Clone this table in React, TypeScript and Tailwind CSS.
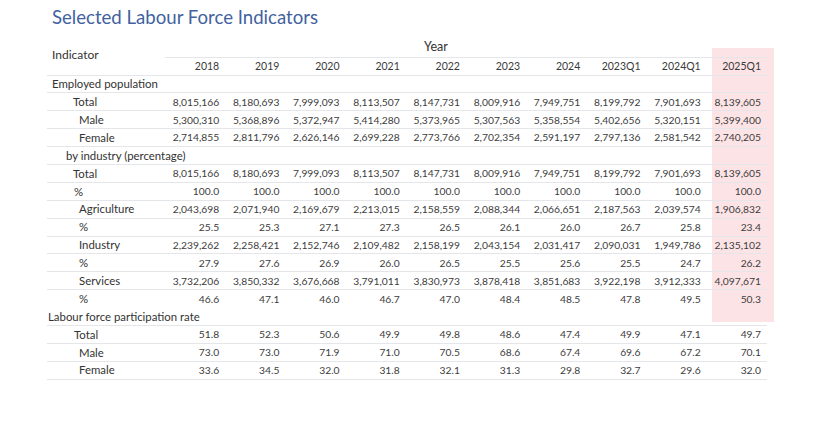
const years = ['2018', '2019', '2020', '2021', '2022', '2023', '2024', '2023Q1', '2024Q1', '2025Q1'];

type Row = { label: string; indent: string; values?: string[]; line?: boolean };

const rows: Row[] = [
  { label: 'Employed population', indent: 'pl-[5px]' },
  { label: 'Total', indent: 'pl-[26px]', values: ['8,015,166', '8,180,693', '7,999,093', '8,113,507', '8,147,731', '8,009,916', '7,949,751', '8,199,792', '7,901,693', '8,139,605'] },
  { label: 'Male', indent: 'pl-[32px]', values: ['5,300,310', '5,368,896', '5,372,947', '5,414,280', '5,373,965', '5,307,563', '5,358,554', '5,402,656', '5,320,151', '5,399,400'] },
  { label: 'Female', indent: 'pl-[32px]', values: ['2,714,855', '2,811,796', '2,626,146', '2,699,228', '2,773,766', '2,702,354', '2,591,197', '2,797,136', '2,581,542', '2,740,205'] },
  { label: 'by industry (percentage)', indent: 'pl-[19px]' },
  { label: 'Total', indent: 'pl-[26px]', values: ['8,015,166', '8,180,693', '7,999,093', '8,113,507', '8,147,731', '8,009,916', '7,949,751', '8,199,792', '7,901,693', '8,139,605'] },
  { label: '%', indent: 'pl-[27px]', values: ['100.0', '100.0', '100.0', '100.0', '100.0', '100.0', '100.0', '100.0', '100.0', '100.0'] },
  { label: 'Agriculture', indent: 'pl-[32px]', values: ['2,043,698', '2,071,940', '2,169,679', '2,213,015', '2,158,559', '2,088,344', '2,066,651', '2,187,563', '2,039,574', '1,906,832'] },
  { label: '%', indent: 'pl-[32px]', values: ['25.5', '25.3', '27.1', '27.3', '26.5', '26.1', '26.0', '26.7', '25.8', '23.4'] },
  { label: 'Industry', indent: 'pl-[32px]', values: ['2,239,262', '2,258,421', '2,152,746', '2,109,482', '2,158,199', '2,043,154', '2,031,417', '2,090,031', '1,949,786', '2,135,102'] },
  { label: '%', indent: 'pl-[32px]', values: ['27.9', '27.6', '26.9', '26.0', '26.5', '25.5', '25.6', '25.5', '24.7', '26.2'] },
  { label: 'Services', indent: 'pl-[32px]', values: ['3,732,206', '3,850,332', '3,676,668', '3,791,011', '3,830,973', '3,878,418', '3,851,683', '3,922,198', '3,912,333', '4,097,671'] },
  { label: '%', indent: 'pl-[32px]', values: ['46.6', '47.1', '46.0', '46.7', '47.0', '48.4', '48.5', '47.8', '49.5', '50.3'], line: false },
  { label: 'Labour force participation rate', indent: 'pl-[1px]' },
  { label: 'Total', indent: 'pl-[27px]', values: ['51.8', '52.3', '50.6', '49.9', '49.8', '48.6', '47.4', '49.9', '47.1', '49.7'] },
  { label: 'Male', indent: 'pl-[32px]', values: ['73.0', '73.0', '71.9', '71.0', '70.5', '68.6', '67.4', '69.6', '67.2', '70.1'] },
  { label: 'Female', indent: 'pl-[32px]', values: ['33.6', '34.5', '32.0', '31.8', '32.1', '31.3', '29.8', '32.7', '29.6', '32.0'] },
];

export default function App() {
  return (
    <main className="relative h-[422px] w-[817px] overflow-hidden bg-white font-['Lato',sans-serif] text-[#333]">
      <h1 className="pl-[52px] pt-[5px] text-[18.6px] leading-[24px] text-[#4262a0]">Selected Labour Force Indicators</h1>

      {/* highlighted latest quarter */}
      <div className="absolute left-[712px] top-[48px] h-[274px] w-[62px] bg-[#fce4e6]" />

      <div className="relative ml-[47px] mt-[10px] w-[720px]">
        <table className="w-[720px] table-fixed border-collapse text-[10.3px] leading-none">
          <colgroup>
            <col className="w-[118px]" />
            {years.map((y) => (
              <col key={y} className="w-[60.2px]" />
            ))}
          </colgroup>
          <thead>
            <tr className="h-[18px]">
              <th rowSpan={2} className="border-b border-[#e4e6ea] pb-[3px] pl-[5px] text-left align-middle text-[12px] font-normal text-[#333]">
                Indicator
              </th>
              <th colSpan={9} className="border-b border-[#e4e6ea] pb-[2px] text-center text-[12.5px] font-normal">
                Year
              </th>
              <th className="border-b border-[#e4e6ea]" />
            </tr>
            <tr className="h-[18px]">
              {years.map((y) => (
                <th key={y} className="border-b border-[#e4e6ea] pr-[6px] text-right text-[10.5px] font-normal text-[#3a3a3a]">
                  {y}
                </th>
              ))}
            </tr>
          </thead>
          <tbody>
            {rows.map((r, i) => (
              <tr key={i} className={`h-[17.9px] ${r.line === false ? '' : 'border-b border-[#e4e6ea]'}`}>
                <td className={`${r.indent} whitespace-nowrap text-left text-[11.4px]`}>{r.label}</td>
                {r.values
                  ? r.values.map((v, j) => (
                      <td key={j} className="pr-[6px] text-right text-[#3c3c3c]">
                        {v}
                      </td>
                    ))
                  : years.map((y) => <td key={y} />)}
              </tr>
            ))}
          </tbody>
        </table>
      </div>
    </main>
  );
}
